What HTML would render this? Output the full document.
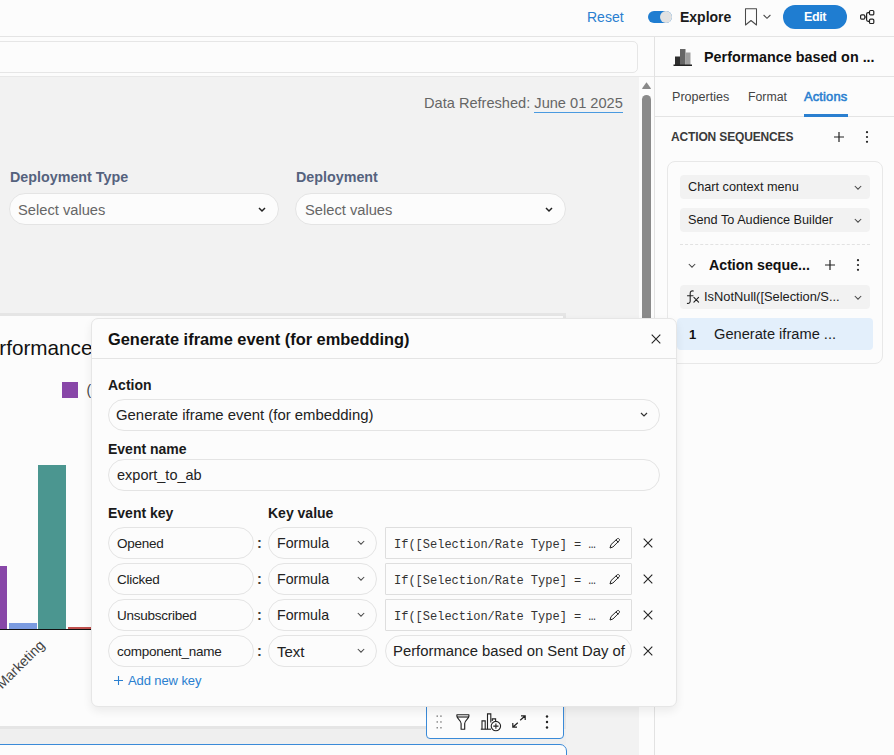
<!DOCTYPE html>
<html><head><meta charset="utf-8">
<style>
*{box-sizing:border-box;margin:0;padding:0}
html,body{width:894px;height:755px;overflow:hidden;background:#fcfcfc;font-family:"Liberation Sans",sans-serif;color:#1a1a1a;font-size:13px}
.abs{position:absolute}
.t{position:absolute;white-space:nowrap;line-height:1}
svg{position:absolute;overflow:visible}
#hdr{position:absolute;left:0;top:0;width:894px;height:37px;background:#fcfcfc;border-bottom:1px solid #e4e4e4}
#main{position:absolute;left:0;top:37px;width:654px;height:718px;background:#fcfcfc;overflow:hidden}
#rp{position:absolute;left:654px;top:37px;width:240px;height:718px;background:#fcfcfc;border-left:1px solid #e2e2e2}
.pill{position:absolute;border:1px solid #e4e4e4;border-radius:16px;background:#fcfcfc}
.sel{position:absolute;left:680px;width:190px;height:24px;border-radius:4px;background:#f2f2f2}
.key{font-size:13.5px;letter-spacing:-0.25px;color:#222}
.mono{font-family:"Liberation Mono",monospace;font-size:12px;color:#333}
.lbl{font-weight:bold;font-size:14px;color:#1a1a1a}
</style></head><body>

<!-- ===== top header ===== -->
<div id="hdr">
  <span class="t" style="left:587px;top:10px;font-size:14px;color:#2a7fd0">Reset</span>
  <div class="abs" style="left:648px;top:11px;width:24px;height:12px;border-radius:6px;background:#1f7dd1"></div>
  <div class="abs" style="left:660px;top:11px;width:12px;height:12px;border-radius:6px;background:#e2e2e2"></div>
  <span class="t" style="left:680px;top:10px;font-size:14px;font-weight:bold;color:#1a1a1a">Explore</span>
  <svg style="left:744px;top:8px" width="14" height="18" viewBox="0 0 14 18"><path d="M1.5 0.8h11v16.2l-5.5-4.5-5.5 4.500z" fill="none" stroke="#4a4a4a" stroke-width="1.05" stroke-linejoin="round"/></svg>
  <svg style="left:763px;top:14px" width="8" height="6" viewBox="0 0 8 6"><path d="M0.600 1l3.400 3.300L7.400 1" fill="none" stroke="#484848" stroke-width="1.05"/></svg>
  <div class="abs" style="left:783px;top:5px;width:64px;height:24px;border-radius:12px;background:#1f7dd1"></div>
  <span class="t" style="left:804px;top:11px;font-size:12.5px;letter-spacing:-0.4px;font-weight:bold;color:#fff">Edit</span>
  <svg style="left:859px;top:10px" width="15" height="14" viewBox="0 0 15 14"><g fill="none" stroke="#222" stroke-width="1.2"><rect x="1.600" y="4.800" width="4.200" height="4.300" rx="1.1"/><rect x="10.500" y="0.500" width="4.300" height="4.300" rx="1.1"/><rect x="10.500" y="9.200" width="4.300" height="4.300" rx="1.1"/><path d="M5.800 7h1.800M10.500 2.650H9.100c-.9 0-1.500.6-1.500 1.500v5.700c0 .9.600 1.500 1.500 1.500h1.400"/></g></svg>
</div>

<!-- ===== main canvas ===== -->
<div id="main"></div>
<div class="abs" style="left:-6px;top:41px;width:644px;height:32px;border:1px solid #e6e6e6;border-radius:5px;background:#fcfcfc"></div>
<div class="abs" style="left:0;top:76px;width:639px;height:679px;background:#f2f2f2;border-top:1px solid #e8e8e8"></div>
<!-- scrollbar -->
<div class="abs" style="left:639px;top:76px;width:15px;height:679px;background:#fcfcfc"></div>
<div class="abs" style="left:0;top:76px;width:654px;height:1px;background:#e8e8e8"></div>
<svg style="left:642px;top:82px" width="9" height="7" viewBox="0 0 9 7"><path d="M4.5 0.3L8.8 6.2c.2.4 0 .8-.4.8H.6c-.4 0-.6-.4-.4-.8z" fill="#8a8a8a"/></svg>
<div class="abs" style="left:642px;top:95px;width:9px;height:240px;border-radius:4.5px 4.5px 0 0;background:#8a8a8a"></div>

<span class="t" style="left:424px;top:96px;font-size:14.6px;color:#666">Data Refreshed: <span style="border-bottom:1px solid #4a9ae0;padding-bottom:1px">June 01 2025</span></span>

<span class="t" style="left:10px;top:170px;font-size:14.3px;font-weight:bold;color:#55627e">Deployment Type</span>
<div class="pill" style="left:9px;top:193px;width:270px;height:32px"></div>
<span class="t" style="left:18px;top:203px;font-size:14.7px;color:#666">Select values</span>
<svg style="left:258px;top:207px" width="8" height="6" viewBox="0 0 8 6"><path d="M1 1l3 3 3-3" fill="none" stroke="#222" stroke-width="1.5"/></svg>

<span class="t" style="left:296px;top:170px;font-size:14.3px;font-weight:bold;color:#55627e">Deployment</span>
<div class="pill" style="left:295px;top:193px;width:271px;height:32px"></div>
<span class="t" style="left:305px;top:203px;font-size:14.7px;color:#666">Select values</span>
<svg style="left:545px;top:207px" width="8" height="6" viewBox="0 0 8 6"><path d="M1 1l3 3 3-3" fill="none" stroke="#222" stroke-width="1.5"/></svg>

<!-- chart card -->
<div class="abs" style="left:-10px;top:313px;width:576px;height:416px;background:#fcfcfc;border:3px solid #e5e5e5"></div>
<span class="t" style="left:-0.7px;top:338.2px;font-size:20.7px;color:#111">rformance</span>
<div class="abs" style="left:62px;top:382px;width:16px;height:16px;background:#8847a8"></div>
<span class="t" style="left:86.5px;top:383px;font-size:14px;color:#444">(</span>
<div class="abs" style="left:0;top:566px;width:7px;height:63px;background:#8847a8"></div>
<div class="abs" style="left:9px;top:623px;width:28px;height:6px;background:#7b9be0"></div>
<div class="abs" style="left:38px;top:465px;width:28px;height:164px;background:#4b9690"></div>
<div class="abs" style="left:68px;top:627px;width:24px;height:2px;background:#c0504d"></div>
<div class="abs" style="left:0;top:629px;width:92px;height:1px;background:#111"></div>
<span class="t" style="right:848.3px;top:634px;font-size:14px;color:#444;transform:rotate(-45deg);transform-origin:100% 84.65%">Marketing</span>

<!-- bottom grey band + selected card -->
<div class="abs" style="left:0;top:729px;width:566px;height:16px;background:#efefef"></div>
<div class="abs" style="left:-10px;top:744px;width:577px;height:30px;border:1px solid #3a8ad8;border-radius:7px;background:#fcfcfc"></div>
<!-- toolbar -->
<div class="abs" style="left:426px;top:700px;width:138px;height:39px;border:1px solid #3a8ad8;border-radius:0 0 4px 4px;background:#fcfcfc"></div>
<svg style="left:435px;top:715px" width="8" height="14" viewBox="0 0 8 14"><g fill="#8c8c8c"><rect x="1.5" y="0.4" width="1.500" height="1.500"/><rect x="5.200" y="0.4" width="1.500" height="1.500"/><rect x="1.500" y="6.200" width="1.500" height="1.500"/><rect x="5.200" y="6.200" width="1.500" height="1.500"/><rect x="1.500" y="12" width="1.500" height="1.500"/><rect x="5.200" y="12" width="1.500" height="1.500"/></g></svg>
<svg style="left:456px;top:714px" width="14" height="16" viewBox="0 0 14 16"><g fill="none" stroke="#222" stroke-width="1.150" stroke-linejoin="round"><path d="M0.900 0.700H12.900V2.300C12.900 4.600 8.700 6.300 8.700 9.400V15.200H5.100V9.400C5.100 6.300 0.900 4.600 0.900 2.300Z"/><path d="M1 3H12.800"/></g></svg>
<svg style="left:480px;top:713px" width="22" height="19" viewBox="0 0 22 19"><g fill="none" stroke="#222" stroke-width="1.100"><path d="M2 16.200V7.900H5.200V16.200M7.500 16.200V0.900H10.800V9.500M12.300 8V5.900H15.600V8"/><path d="M0.800 16.200H11"/><circle cx="15.900" cy="13.100" r="4.700" fill="#fcfcfc"/><path d="M15.900 10.500v5.200M13.300 13.100h5.200"/></g></svg>
<svg style="left:512px;top:715px" width="14" height="13" viewBox="0 0 14 13"><g fill="none" stroke="#222" stroke-width="1.200"><path d="M8.2 5.300L13 1M9 0.800H13.200v4.200M5.800 7.700L1 12M5 12.200H0.800V8"/></g></svg>
<svg style="left:545px;top:715px" width="4" height="14" viewBox="0 0 4 14"><g fill="#222"><circle cx="2" cy="1.500" r="1.200"/><circle cx="2" cy="7" r="1.200"/><circle cx="2" cy="12.500" r="1.200"/></g></svg>

<!-- ===== right panel ===== -->
<div id="rp"></div>
<svg style="left:673px;top:48px" width="20" height="19" viewBox="0 0 20 19"><rect x="2" y="8.5" width="5" height="8.5" fill="#2e2e2e"/><rect x="7" y="1" width="5.5" height="16" fill="#666"/><rect x="12.5" y="4.500" width="5" height="12.500" fill="#a0a0a0"/><rect x="0.500" y="16.500" width="18.5" height="1.500" fill="#222"/></svg>
<span class="t" style="left:704px;top:50px;font-size:14.35px;font-weight:bold;color:#111">Performance based on ...</span>
<div class="abs" style="left:655px;top:76px;width:239px;height:1px;background:#e4e4e4"></div>
<span class="t" style="left:672px;top:91px;font-size:12.6px;color:#444">Properties</span>
<span class="t" style="left:748px;top:91px;font-size:12.3px;color:#444">Format</span>
<span class="t" style="left:804px;top:91px;font-size:12.9px;letter-spacing:0.15px;color:#2a7fd0;-webkit-text-stroke:0.55px #2a7fd0">Actions</span>
<div class="abs" style="left:804px;top:114px;width:44px;height:3px;z-index:2;background:#2a7fd0"></div>
<div class="abs" style="left:655px;top:116px;width:239px;height:1px;background:#e4e4e4"></div>

<span class="t" style="left:671px;top:131px;font-size:12px;letter-spacing:-0.15px;font-weight:bold;color:#3a3a3a">ACTION SEQUENCES</span>
<svg style="left:834px;top:132px" width="10" height="10" viewBox="0 0 10 10"><path d="M5 0v10M0 5h10" stroke="#222" stroke-width="1.200"/></svg>
<svg style="left:865px;top:131px" width="4" height="12" viewBox="0 0 4 12"><g fill="#222"><circle cx="2" cy="1.200" r="1.100"/><circle cx="2" cy="6" r="1.100"/><circle cx="2" cy="10.800" r="1.100"/></g></svg>

<div class="abs" style="left:667px;top:161px;width:216px;height:203px;border:1px solid #e8e8e8;border-radius:8px;background:#fcfcfc"></div>
<div class="sel" style="top:175px"></div>
<span class="t" style="left:688px;top:181px;font-size:12.7px;color:#1a1a1a">Chart context menu</span>
<svg style="left:854px;top:185px" width="8" height="6" viewBox="0 0 8 6"><path d="M0.800 1l3.200 3.200 3.200-3.200" fill="none" stroke="#484848" stroke-width="1.05"/></svg>
<div class="sel" style="top:208px"></div>
<span class="t" style="left:688px;top:214px;font-size:12.7px;color:#1a1a1a">Send To Audience Builder</span>
<svg style="left:854px;top:218px" width="8" height="6" viewBox="0 0 8 6"><path d="M0.800 1l3.200 3.200 3.200-3.200" fill="none" stroke="#484848" stroke-width="1.05"/></svg>
<div class="abs" style="left:680px;top:244px;width:190px;height:0;border-top:1px dashed #e2e2e2"></div>

<svg style="left:688px;top:263px" width="8" height="6" viewBox="0 0 8 6"><path d="M0.800 1l3.200 3.200 3.200-3.200" fill="none" stroke="#484848" stroke-width="1.05"/></svg>
<span class="t" style="left:709px;top:258px;font-size:14.2px;font-weight:bold;color:#111">Action seque...</span>
<svg style="left:825px;top:260px" width="10" height="10" viewBox="0 0 10 10"><path d="M5 0v10M0 5h10" stroke="#222" stroke-width="1.200"/></svg>
<svg style="left:856px;top:259px" width="4" height="12" viewBox="0 0 4 12"><g fill="#222"><circle cx="2" cy="1.200" r="1.100"/><circle cx="2" cy="6" r="1.100"/><circle cx="2" cy="10.800" r="1.100"/></g></svg>

<div class="sel" style="top:285px"></div>
<svg style="left:686px;top:290px" width="14" height="15" viewBox="0 0 14 15"><g fill="none" stroke="#222" stroke-width="1.1" stroke-linecap="round"><path d="M7.300 1c-1.700-.5-3.100.3-3.100 2.200V11c0 1.700-1 2.700-2.800 2.400"/><path d="M1.500 5.800H7"/><path d="M7.900 7.300l4.700 4.800M12.600 7.300l-4.700 4.800"/></g></svg>
<span class="t" style="left:704px;top:291px;font-size:12.85px;color:#1a1a1a">IsNotNull([Selection/S...</span>
<svg style="left:854px;top:295px" width="8" height="6" viewBox="0 0 8 6"><path d="M0.800 1l3.200 3.200 3.200-3.200" fill="none" stroke="#484848" stroke-width="1.05"/></svg>

<div class="abs" style="left:677px;top:318px;width:196px;height:32px;border-radius:4px;background:#e3effb"></div>
<span class="t" style="left:689px;top:328px;font-size:13px;font-weight:bold;color:#111">1</span>
<span class="t" style="left:714px;top:327px;font-size:14.65px;color:#1a1a1a">Generate iframe ...</span>

<!-- ===== modal ===== -->
<div class="abs" id="modal" style="left:91px;top:318px;width:586px;height:389px;border-radius:7px;background:#fcfcfc;border:1px solid #e6e6e6;box-shadow:0 4px 10px rgba(0,0,0,.07)"></div>
<span class="t" style="left:108px;top:331px;font-size:16.4px;font-weight:bold;color:#111">Generate iframe event (for embedding)</span>
<svg style="left:651px;top:334px" width="10" height="10" viewBox="0 0 10 10"><path d="M0.700 0.700l8.600 8.600M9.300 0.700L0.700 9.300" stroke="#222" stroke-width="1.100" fill="none"/></svg>
<div class="abs" style="left:92px;top:358px;width:584px;height:1px;background:#e4e4e4"></div>

<span class="t lbl" style="left:108px;top:378px">Action</span>
<div class="pill" style="left:108px;top:399px;width:552px;height:32px"></div>
<span class="t" style="left:116px;top:408px;font-size:14.9px;color:#222">Generate iframe event (for embedding)</span>
<svg style="left:640px;top:412px" width="8" height="6" viewBox="0 0 8 6"><path d="M1 1l3 3 3-3" fill="none" stroke="#333" stroke-width="1.200"/></svg>

<span class="t lbl" style="left:108px;top:442px">Event name</span>
<div class="pill" style="left:108px;top:459px;width:552px;height:32px"></div>
<span class="t" style="left:117px;top:468px;font-size:14.5px;color:#222">export_to_ab</span>

<span class="t lbl" style="left:108px;top:506px">Event key</span>
<span class="t lbl" style="left:268px;top:506px">Key value</span>
<!-- row 1 -->
<div class="pill" style="left:108px;top:527px;width:146px;height:32px"></div>
<span class="t key" style="left:117px;top:537px">Opened</span>
<span class="t" style="left:257px;top:536px;font-size:14.5px;font-weight:bold;color:#3a3a3a">:</span>
<div class="pill" style="left:268px;top:527px;width:109px;height:32px"></div>
<span class="t" style="left:277px;top:536px;font-size:14.2px;color:#222">Formula</span>
<svg style="left:357px;top:540px" width="8" height="6" viewBox="0 0 8 6"><path d="M0.800 1l3.200 3.200 3.200-3.200" fill="none" stroke="#4a4a4a" stroke-width="1.050"/></svg>
<div class="abs" style="left:385px;top:527px;width:247px;height:32px;border:1px solid #dedede;border-radius:1px;background:#fcfcfc"></div>
<span class="t mono" style="left:394px;top:539px">If([Selection/Rate Type] = …</span>
<svg style="left:609px;top:538px" width="12" height="11" viewBox="0 0 12 11"><g fill="none" stroke="#222" stroke-width="1" stroke-linejoin="round"><path d="M1 10l1-3.400L8.200 0.800c.600-.500 1.500-.400 2 .200.500.600.400 1.400-.200 1.900L3.900 9z"/><path d="M7 1.900l2.300 2.500"/></g></svg>
<svg style="left:643px;top:538px" width="10" height="10" viewBox="0 0 10 10"><path d="M0.700 0.700l8.600 8.600M9.300 0.700L0.700 9.300" stroke="#222" stroke-width="1.100" fill="none"/></svg>
<!-- row 2 -->
<div class="pill" style="left:108px;top:563px;width:146px;height:32px"></div>
<span class="t key" style="left:117px;top:573px">Clicked</span>
<span class="t" style="left:257px;top:572px;font-size:14.5px;font-weight:bold;color:#3a3a3a">:</span>
<div class="pill" style="left:268px;top:563px;width:109px;height:32px"></div>
<span class="t" style="left:277px;top:572px;font-size:14.2px;color:#222">Formula</span>
<svg style="left:357px;top:576px" width="8" height="6" viewBox="0 0 8 6"><path d="M0.800 1l3.200 3.200 3.200-3.200" fill="none" stroke="#4a4a4a" stroke-width="1.050"/></svg>
<div class="abs" style="left:385px;top:563px;width:247px;height:32px;border:1px solid #dedede;border-radius:1px;background:#fcfcfc"></div>
<span class="t mono" style="left:394px;top:575px">If([Selection/Rate Type] = …</span>
<svg style="left:609px;top:574px" width="12" height="11" viewBox="0 0 12 11"><g fill="none" stroke="#222" stroke-width="1" stroke-linejoin="round"><path d="M1 10l1-3.400L8.200 0.800c.600-.500 1.500-.400 2 .200.500.600.400 1.400-.200 1.900L3.900 9z"/><path d="M7 1.900l2.300 2.500"/></g></svg>
<svg style="left:643px;top:574px" width="10" height="10" viewBox="0 0 10 10"><path d="M0.700 0.700l8.600 8.600M9.300 0.700L0.700 9.300" stroke="#222" stroke-width="1.100" fill="none"/></svg>
<!-- row 3 -->
<div class="pill" style="left:108px;top:599px;width:146px;height:32px"></div>
<span class="t key" style="left:117px;top:609px">Unsubscribed</span>
<span class="t" style="left:257px;top:608px;font-size:14.5px;font-weight:bold;color:#3a3a3a">:</span>
<div class="pill" style="left:268px;top:599px;width:109px;height:32px"></div>
<span class="t" style="left:277px;top:608px;font-size:14.2px;color:#222">Formula</span>
<svg style="left:357px;top:612px" width="8" height="6" viewBox="0 0 8 6"><path d="M0.800 1l3.200 3.200 3.200-3.200" fill="none" stroke="#4a4a4a" stroke-width="1.050"/></svg>
<div class="abs" style="left:385px;top:599px;width:247px;height:32px;border:1px solid #dedede;border-radius:1px;background:#fcfcfc"></div>
<span class="t mono" style="left:394px;top:611px">If([Selection/Rate Type] = …</span>
<svg style="left:609px;top:610px" width="12" height="11" viewBox="0 0 12 11"><g fill="none" stroke="#222" stroke-width="1" stroke-linejoin="round"><path d="M1 10l1-3.400L8.200 0.800c.600-.500 1.500-.400 2 .200.500.600.400 1.400-.200 1.900L3.900 9z"/><path d="M7 1.900l2.300 2.500"/></g></svg>
<svg style="left:643px;top:610px" width="10" height="10" viewBox="0 0 10 10"><path d="M0.700 0.700l8.600 8.600M9.300 0.700L0.700 9.300" stroke="#222" stroke-width="1.100" fill="none"/></svg>
<!-- row 4 -->
<div class="pill" style="left:108px;top:635px;width:146px;height:32px"></div>
<span class="t key" style="left:117px;top:645px">component_name</span>
<span class="t" style="left:257px;top:644px;font-size:14.5px;font-weight:bold;color:#3a3a3a">:</span>
<div class="pill" style="left:268px;top:635px;width:109px;height:32px"></div>
<span class="t" style="left:277px;top:644px;font-size:15px;color:#222">Text</span>
<svg style="left:357px;top:648px" width="8" height="6" viewBox="0 0 8 6"><path d="M0.800 1l3.200 3.200 3.200-3.200" fill="none" stroke="#4a4a4a" stroke-width="1.050"/></svg>
<div class="pill" style="left:385px;top:635px;width:247px;height:32px"></div><div class="abs" style="left:392px;top:637px;width:234px;height:28px;overflow:hidden"><span class="t" style="left:1px;top:7px;font-size:14.85px;color:#222">Performance based on Sent Day of Week</span></div>
<svg style="left:643px;top:646px" width="10" height="10" viewBox="0 0 10 10"><path d="M0.700 0.700l8.600 8.600M9.300 0.700L0.700 9.300" stroke="#222" stroke-width="1.100" fill="none"/></svg>
<svg style="left:114px;top:676px" width="9" height="9" viewBox="0 0 9 9"><path d="M4.500 0v9M0 4.500h9" stroke="#2a7fd0" stroke-width="1.100"/></svg>
<span class="t key" style="left:128px;top:674px;font-size:13px;letter-spacing:-0.1px;color:#2a7fd0">Add new key</span>
</body></html>
